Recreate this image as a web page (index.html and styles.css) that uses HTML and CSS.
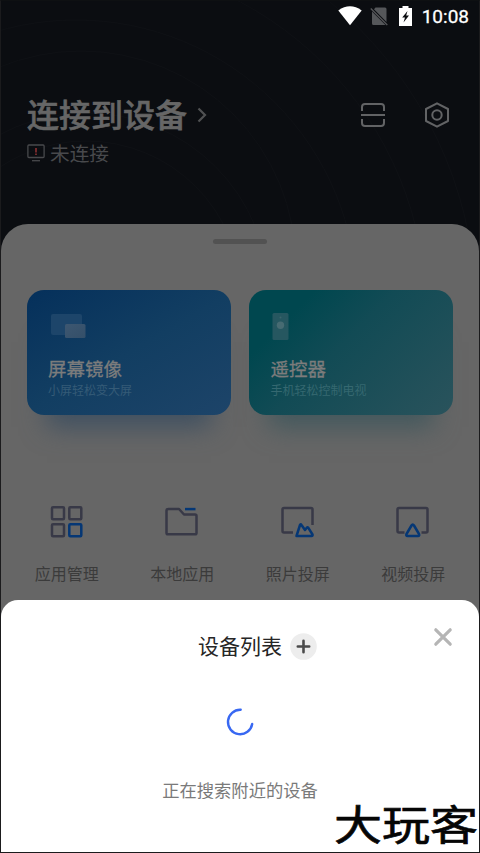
FILE: index.html
```html
<!DOCTYPE html>
<html lang="zh-CN">
<head>
<meta charset="utf-8">
<title>设备列表</title>
<link rel="stylesheet" href="styles.css">
</head>
<body>
<div class="screen">
  <svg class="ripples" viewBox="0 0 480 240" fill="none" stroke="#0f1115" stroke-width="1">
    <circle cx="85" cy="295" r="155"/><circle cx="85" cy="295" r="183"/><circle cx="80" cy="265" r="215"/>
    <circle cx="75" cy="300" r="281"/><circle cx="75" cy="310" r="350"/><circle cx="75" cy="310" r="400"/>
  </svg>
  <header class="status">
    <svg width="24" height="20" viewBox="0 0 24 20"><path d="M.3 4.500Q12-3.800 23.700 4.500L12 19.300Z" fill="#fff"/></svg>
    <svg class="sim" width="18" height="19" viewBox="0 0 18 19"><path d="M5.500 .5H15Q16.500 .5 16.500 2V15L4 2.200ZM2 4.500L15.500 18H3.500Q2 18 2 16.500Z" fill="#55575a"/><path d="M.8 1.500L17.300 18" stroke="#55575a" stroke-width="1.300"/></svg>
    <svg class="battery" width="13" height="20" viewBox="0 0 13 20"><path d="M3.500 0H9.500V2H13V20H0V2H3.500Z" fill="#fff"/><path d="M8.500 5L3.200 11.500H6L4.500 16.500L10 9.500H7.200Z" fill="#0b0d11"/></svg>
    <time>10:08</time>
  </header>
  <section class="hero">
    <div class="connect">
      <h1>连接到设备</h1>
      <svg class="chevron" width="10" height="16" viewBox="0 0 10 16"><path d="M1.500 1.500L8 8L1.500 14.500" fill="none" stroke="#505153" stroke-width="2.200"/></svg>
      <div class="tools">
        <svg width="26" height="26" viewBox="0 0 26 26" fill="none" stroke="#626365" stroke-width="2"><path d="M2 9V5Q2 2 5 2H21Q24 2 24 5V9M1 13H25M2 17V21Q2 24 5 24H21Q24 24 24 21V17"/></svg>
        <svg width="26" height="26" viewBox="0 0 26 26" fill="none" stroke="#626365" stroke-width="2" stroke-linejoin="round"><path d="M13 1.300L24 7V19L13 24.700L2 19V7Z"/><circle cx="13" cy="13" r="4.700"/></svg>
      </div>
    </div>
    <p class="state">
      <svg width="18" height="18" viewBox="0 0 18 18" fill="none" stroke="#48494c" stroke-width="1.300"><rect x=".9" y="1" width="16.200" height="12.500" rx="1"/><path d="M5 16.700H13"/><path d="M9 4V8.500M9 9.500V11" stroke="#792b2d" stroke-width="1.900"/></svg>
      <span>未连接</span>
    </p>
  </section>
  <main class="panel">
    <i class="handle"></i>
    <div class="cards">
      <article class="card mirror">
        <svg width="38" height="30" viewBox="0 0 38 30"><defs><linearGradient id="pane" x2="1" y2="1"><stop stop-color="#3d5771"/><stop offset="1" stop-color="#344f69"/></linearGradient></defs><rect x="3" y="1" width="31" height="21" rx="2" fill="#1d456a"/><rect x="17" y="11" width="20.500" height="14" rx="1.500" fill="url(#pane)"/></svg>
        <h2>屏幕镜像</h2><p>小屏轻松变大屏</p>
      </article>
      <article class="card remote">
        <svg width="38" height="30" viewBox="0 0 38 30"><rect x="2.500" y="0" width="16" height="27" rx="1.500" fill="#265760"/><circle cx="10.500" cy="12.300" r="3.700" fill="#476b72"/><circle cx="10.500" cy="4.500" r="1" fill="#3c646c"/></svg>
        <h2>遥控器</h2><p>手机轻松控制电视</p>
      </article>
    </div>
    <nav class="apps">
      <a><svg viewBox="0 0 34 34"><rect x="2" y="2.200" width="12" height="12" rx="1"/><rect x="19.300" y="2.200" width="12" height="12" rx="1"/><rect x="2" y="19.200" width="12" height="12" rx="1"/><rect class="blue" x="19.300" y="19.200" width="12" height="12" rx="1"/></svg>应用管理</a>
      <a><svg viewBox="0 0 34 34"><path d="M3.500 4H14L19 9.500H30Q31.500 9.500 31.500 11V28Q31.500 29.300 30 29.300H3Q1.500 29.300 1.500 28V5.500Q1.500 4 3.500 4Z"/><path class="blue" d="M20 4.100H30.500"/></svg>本地应用</a>
      <a><svg viewBox="0 0 34 34"><path d="M12 27.500H3Q1.500 27.500 1.500 26V4.500Q1.500 3 3 3H30Q31.500 3 31.500 4.500V20"/><path class="blue" d="M15.500 31L19 20Q19.500 18.500 20.500 20L24 25L25.800 22.700Q26.500 22 27.200 22.700L31.500 29.500Q32 31 30.500 31Z"/></svg>照片投屏</a>
      <a><svg viewBox="0 0 34 34"><path d="M8.500 27.500H3Q1.500 27.500 1.500 26V4.500Q1.500 3 3 3H30Q31.500 3 31.500 4.500V26Q31.500 27.500 30 27.500H25.500"/><path class="blue" d="M10.500 29L15.500 20.500Q16.700 18.500 18 20.500L23 29Q23.800 31 22 31H11.500Q9.700 31 10.500 29Z"/></svg>视频投屏</a>
    </nav>
  </main>
  <section class="sheet">
    <div class="sheet-title">
      <h3>设备列表</h3>
      <svg width="27" height="27" viewBox="0 0 27 27"><circle cx="13.500" cy="13.500" r="13.300" fill="#ededed"/><path d="M13.500 7.800V19.200M7.800 13.500H19.200" stroke="#4b4b4b" stroke-width="2.600" stroke-linecap="round"/></svg>
    </div>
    <svg class="close" width="20" height="20" viewBox="0 0 20 20"><path d="M2.800 2.800L17.200 17.200M17.200 2.800L2.800 17.200" stroke="#b5b5b5" stroke-width="3.200" stroke-linecap="round"/></svg>
    <svg class="spinner" width="28" height="28" viewBox="0 0 28 28"><path d="M14.700 1.800A12.200 12.200 0 1 0 26.200 16" fill="none" stroke="#3868f2" stroke-width="2.400" stroke-linecap="round"/></svg>
    <p class="searching">正在搜索附近的设备</p>
  </section>
  <div class="watermark">大玩客</div>
</div>
</body>
</html>
```
FILE: styles.css
```css
* { box-sizing: border-box; margin: 0; }
body {
  font-family: "Noto Sans CJK SC", sans-serif;
  background: #0b0d11;
}
svg { display: block; flex: none; }
.screen {
  position: relative;
  display: flex;
  flex-direction: column;
  height: 853px;
  overflow: hidden;
  border: 1px solid #1b1b1d;
  border-top-color: #0e1012;
  background: #0b0d11;
}
.ripples { position: absolute; top: 0; left: 0; width: 480px; height: 240px; }
.status {
  position: relative;
  display: flex;
  align-items: center;
  height: 31px;
  padding: 0 10px 0 337px;
  color: #fff;
}
.status svg { margin-bottom: 1px; }
.status .sim { margin-left: 8px; }
.status .battery { margin-left: 11px; }
.status time {
  margin-left: auto;
  font: 400 19px/31px Roboto, sans-serif;
  -webkit-text-stroke: .3px #fff;
}
.hero { position: relative; height: 192px; padding: 59px 29px 0 26px; }
.connect { display: flex; align-items: center; height: 48px; }
h1 {
  padding-bottom: 3px;
  font-size: 32px;
  line-height: 45px;
  font-weight: 500;
  color: #666;
  -webkit-text-stroke: .6px #666;
}
.chevron { margin-left: 10px; }
.tools { display: flex; gap: 38px; margin-left: auto; }
.state {
  display: flex;
  align-items: center;
  gap: 5px;
  height: 28px;
  font-size: 19.700px;
  line-height: 28px;
  color: #48494c;
}
.panel {
  position: relative;
  flex: 1;
  border-radius: 27px 27px 0 0;
  background: #666;
}
.handle {
  display: block;
  width: 54px;
  height: 5px;
  margin: 0 auto;
  transform: translateY(15px);
  border-radius: 3px;
  background: #525252;
}
.cards { display: flex; gap: 18px; padding: 61px 26px 0; }
.card {
  flex: 1;
  height: 124.500px;
  padding: 23px 21px 0;
  border-radius: 17px;
}
.mirror {
  background: linear-gradient(150deg, #05305b, #123e62 50%, #1d4469);
  box-shadow: 0 32px 24px -20px #3f5061;
}
.remote {
  padding-left: 22px;
  background: linear-gradient(135deg, #00474f 20%, #124b55 45%, #2a535c);
  box-shadow: 0 32px 24px -20px #42585d;
}
.remote svg { margin-left: -1px; }
.card h2 {
  margin-top: 11px;
  font-size: 18.500px;
  line-height: 28px;
  font-weight: 400;
  color: #7c7c7c;
  -webkit-text-stroke: .3px #7c7c7c;
}
.card p { font-size: 12px; line-height: 16px; color: #355b77; }
.remote p { color: #356870; }
.apps {
  display: grid;
  grid-template-columns: repeat(4, 1fr);
  margin-top: 90px;
  padding: 0 8px;
}
.apps a {
  display: flex;
  flex-direction: column;
  align-items: center;
  gap: 22px;
  font-size: 16px;
  line-height: 24px;
  color: #3b3b3b;
}
.apps svg {
  width: 34px;
  height: 34px;
  fill: none;
  stroke: #383947;
  stroke-width: 2.500;
  stroke-linejoin: round;
}
.apps .blue { stroke: #053775; }
.sheet {
  position: absolute;
  left: 0;
  right: 0;
  bottom: 0;
  height: 252.500px;
  padding-top: 30.500px;
  border-radius: 17px 17px 0 0;
  background: #fff;
}
.sheet-title {
  display: flex;
  justify-content: center;
  align-items: center;
  gap: 8px;
  height: 32px;
  padding-left: 35px;
}
h3 { padding-bottom: 2px; font-size: 21px; line-height: 30px; font-weight: 400; color: #262626; }
.close { position: absolute; top: 27.500px; right: 26px; }
.spinner { margin: 46px auto 0; }
.searching {
  margin-top: 41px;
  font-size: 17.300px;
  line-height: 26px;
  text-align: center;
  color: #7a7a7a;
}
.watermark {
  position: absolute;
  right: 1px;
  bottom: 1px;
  font-size: 48px;
  line-height: 58px;
  font-weight: 400;
  color: #050505;
  transform: scaleY(.86);
  -webkit-text-stroke: .8px #050505;
}
```
